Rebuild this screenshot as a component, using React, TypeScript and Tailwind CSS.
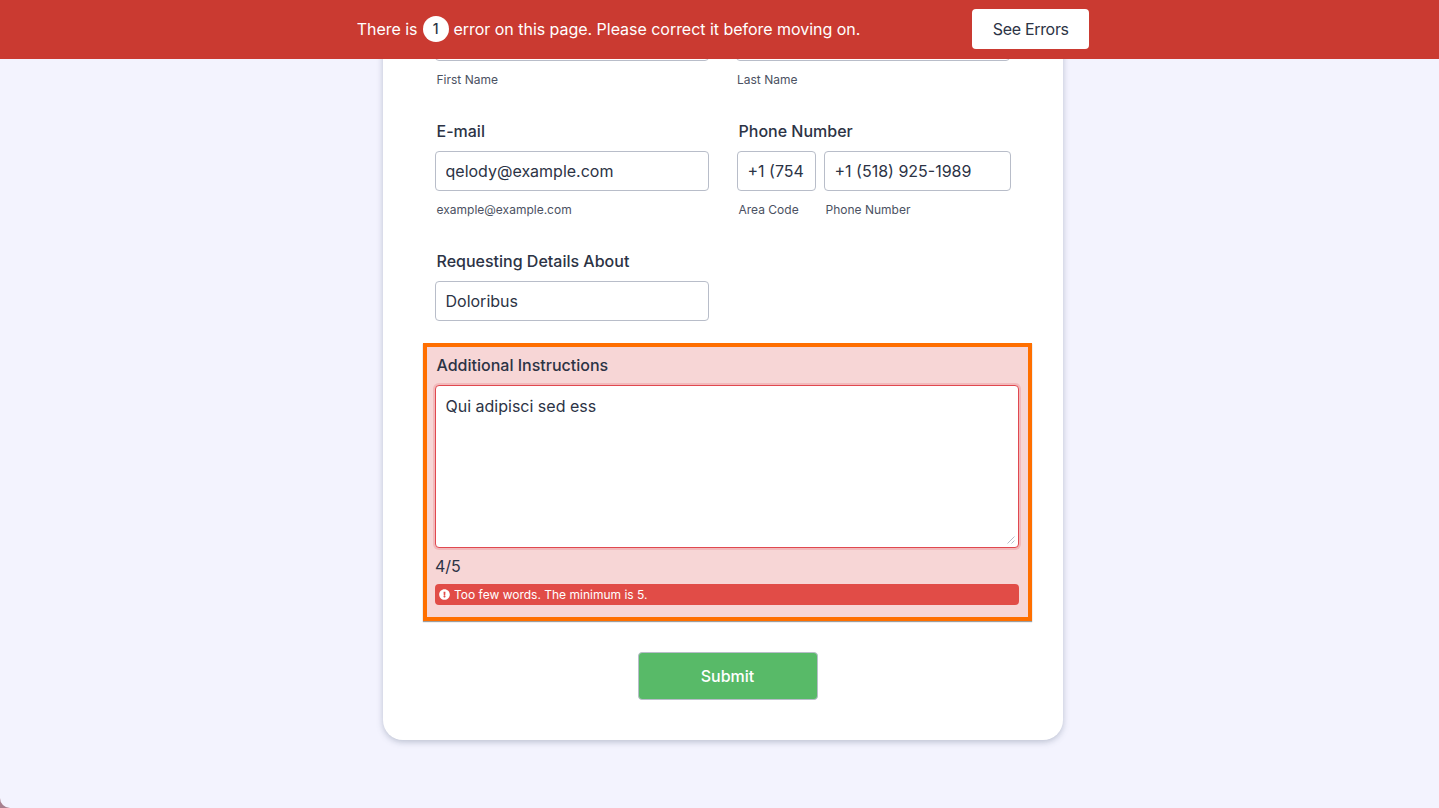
import { FaExclamationCircle } from "react-icons/fa";

const inputClass =
  "h-10 w-full rounded-[4px] border border-[#b8bdc9] bg-white px-[9.5px] text-base text-[#2c3345] outline-none";

function Label({ children }: { children: React.ReactNode }) {
  return <label className="mb-[10px] block pl-[1.5px] text-base leading-5 font-medium text-[#2c3345]">{children}</label>;
}

function Sub({ children }: { children: React.ReactNode }) {
  return <p className="mt-[11px] pl-[1.5px] text-xs leading-4 text-[#4b5162]">{children}</p>;
}

export default function App() {
  return (
    <div className="h-[808px] overflow-hidden bg-[#a8808f] font-['Inter',sans-serif]">
      <div className="relative h-full overflow-hidden rounded-bl-[10px] bg-[#f3f3fe]">
        <div className="absolute inset-x-0 top-0 z-10 flex h-[59px] items-center justify-center gap-[112px] bg-[#ca3a31] pb-px pl-[7px]">
          <p className="flex items-center text-base tracking-[-0.002em] text-white">
            There is
            <span className="mx-[5px] flex h-[26px] w-[26px] items-center justify-center rounded-full bg-white text-sm font-medium text-[#2c3345]">
              1
            </span>
            error on this page. Please correct it before moving on.
          </p>
          <button className="h-10 w-[117px] rounded-[4px] bg-white text-base tracking-[-0.02em] text-[#2c3345]">
            See Errors
          </button>
        </div>

        <div className="flex justify-center pl-[7px]">
          <div className="w-[680px] rounded-b-[20px] bg-white pt-[21px] pr-[31px] pb-10 pl-10 shadow-[0_2px_6px_rgba(87,100,126,0.35)]">
            <div className="grid grid-cols-[274px_274px] gap-x-[27px] pl-3">
              <div>
                <input className={inputClass} />
                <Sub>First Name</Sub>
              </div>
              <div>
                <input className={inputClass} />
                <p className="mt-[11px] pl-px text-xs leading-4 text-[#4b5162]">Last Name</p>
              </div>
            </div>

            <div className="mt-[33px] grid grid-cols-[274px_274px] gap-x-7 pl-3">
              <div>
                <Label>E-mail</Label>
                <input className={inputClass} defaultValue="qelody@example.com" />
                <Sub>example@example.com</Sub>
              </div>
              <div>
                <Label>Phone Number</Label>
                <div className="flex gap-2">
                  <div className="w-[79px] shrink-0">
                    <input className={inputClass} defaultValue="+1 (754" />
                    <Sub>Area Code</Sub>
                  </div>
                  <div className="w-[187px] shrink-0">
                    <input className={inputClass} defaultValue="+1 (518) 925-1989" />
                    <Sub>Phone Number</Sub>
                  </div>
                </div>
              </div>
            </div>

            <div className="mt-[33px] w-[286px] pl-3">
              <Label>Requesting Details About</Label>
              <input className={inputClass} defaultValue="Doloribus" />
            </div>

            <div className="mt-[22px] w-[609px] border-4 border-[#ff6f00] bg-[#f7d6d6] pt-2 pr-[9px] pb-3 pl-2 shadow-[0_1px_1px_rgba(60,60,60,0.5)]">
              <Label>Additional Instructions</Label>
              <div className="relative">
                <textarea
                  className="block h-[163px] w-full resize-none rounded-[4px] border border-[#e0484f] bg-white px-[9.5px] py-[10px] text-base leading-5 text-[#2c3345] shadow-[0_0_0_2px_rgba(224,72,79,0.2)] outline-none"
                  defaultValue="Qui adipisci sed ess"
                />
                <svg className="absolute right-[4px] bottom-[4px] h-[8px] w-[8px]" viewBox="0 0 8 8">
                  <path d="M0.5 7.5 7.5 0.5M4.5 7.5 7.5 4.5" stroke="#b8bdc9" strokeWidth="1" fill="none" />
                </svg>
              </div>
              <p className="mt-2 text-base leading-5 text-[#2c3345]">4/5</p>
              <div className="mt-2 flex h-[21px] items-center gap-[4px] rounded-[4px] bg-[#e14c47] pl-[4px] text-xs text-white">
                <FaExclamationCircle className="h-[11px] w-[11px]" />
                Too few words. The minimum is 5.
              </div>
            </div>

            <div className="mt-[31px] flex w-[609px] justify-center">
              <button className="h-12 w-[180px] rounded-[4px] border border-[#b8bdc9] bg-[#58ba68] text-base font-medium text-white">
                Submit
              </button>
            </div>
          </div>
        </div>
      </div>
    </div>
  );
}
